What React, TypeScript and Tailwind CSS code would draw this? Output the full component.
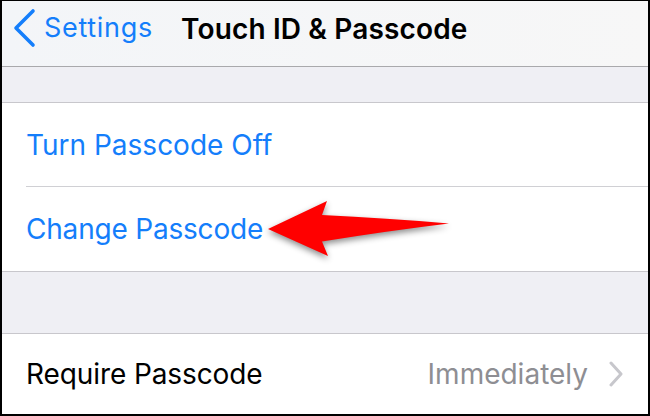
import React from "react";

export default function App() {
  return (
    <div className="relative w-[650px] h-[416px] overflow-hidden bg-white border-t border-l-2 border-r-2 border-b-2 border-black flex flex-col font-['Inter',sans-serif]">
      {/* Nav bar */}
      <div className="h-[66px] shrink-0 bg-gradient-to-r from-[#f3f5f8] to-[#f7f7f7] border-b border-[#a9a9ac]">
        <div className="h-[55px] flex items-center">
          <svg width="42" height="55" viewBox="0 0 42 55" className="shrink-0">
            <polyline
              points="31,10 14,27 31,44"
              fill="none"
              stroke="#147efb"
              strokeWidth="3.6"
              strokeLinecap="round"
              strokeLinejoin="round"
            />
          </svg>
          <span className="text-[27px] text-[#147efb] tracking-[0.7px]">Settings</span>
          <span className="ml-[28px] text-[28px] font-semibold text-black tracking-[0.15px]">
            Touch ID &amp; Passcode
          </span>
        </div>
      </div>

      {/* Gray spacer */}
      <div className="h-[36px] shrink-0 bg-[#efeff4] border-b border-[#c8c7cc]" />

      {/* Group 1 */}
      <div className="shrink-0 bg-white">
        <div className="h-[83px] flex items-center pl-[24px]">
          <span className="text-[28px] text-[#147efb]">Turn Passcode Off</span>
        </div>
        <div className="ml-[24px] h-px bg-[#d0d0d4]" />
        <div className="h-[85px] flex items-center pl-[24px] border-b border-[#c8c7cc]">
          <span className="text-[28px] text-[#147efb] tracking-[-0.2px]">Change Passcode</span>
        </div>
      </div>

      {/* Gray spacer */}
      <div className="h-[62px] shrink-0 bg-[#efeff4] border-b border-[#c8c7cc]" />

      {/* Group 2 */}
      <div className="flex-1 bg-white flex items-center pl-[24px] pr-[24px]">
        <span className="text-[28px] text-black tracking-[-0.1px]">Require Passcode</span>
        <span className="ml-auto text-[28px] text-[#8e8e93]">Immediately</span>
        <svg width="16" height="26" viewBox="0 0 16 26" className="ml-[20px] shrink-0">
          <polyline
            points="3,2 13,13 3,24"
            fill="none"
            stroke="#c7c7cc"
            strokeWidth="3"
            strokeLinecap="round"
            strokeLinejoin="round"
          />
        </svg>
      </div>

      {/* Annotation arrow */}
      <svg
        className="absolute left-0 top-0 pointer-events-none"
        width="650"
        height="416"
        viewBox="0 0 650 416"
        style={{ filter: "drop-shadow(0px 3px 3px rgba(0,0,0,0.45))" }}
      >
        <path
          d="M266,228 L325,200 L320,214 Q385,217 447,222.5 Q385,230 320,240.5 L326,255 Z"
          fill="#ff0000"
        />
      </svg>
    </div>
  );
}
